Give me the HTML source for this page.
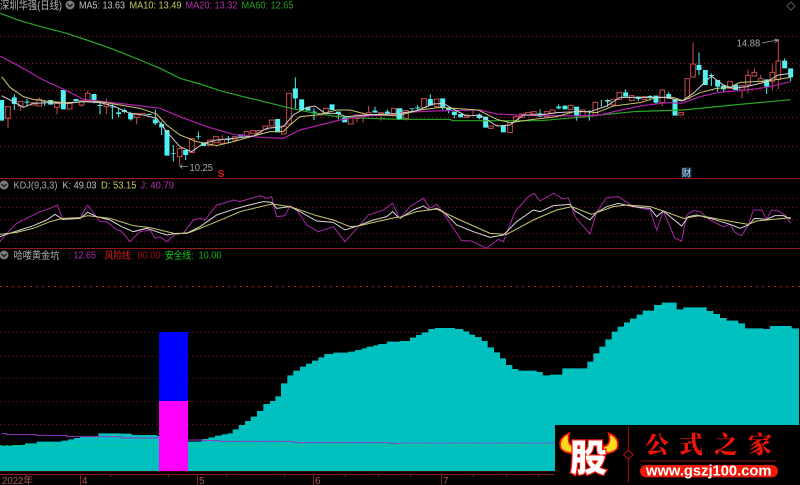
<!DOCTYPE html>
<html><head><meta charset="utf-8"><style>
html,body{margin:0;padding:0;background:#000;width:800px;height:485px;overflow:hidden}
svg{display:block;font-family:"Liberation Sans","Noto Sans CJK SC",sans-serif}
text{font-size:10px}
.b{filter:blur(.3px)}
</style></head><body>
<svg width="800" height="485" viewBox="0 0 800 485" xmlns="http://www.w3.org/2000/svg">
<rect width="800" height="485" fill="#000"/>
<g class="b">
<!-- grids -->
<g stroke="#9a1616" stroke-width="1" stroke-dasharray="1 3" fill="none">
<path d="M0 36.5H800M0 63.5H800M0 90.5H800M0 117.5H800M0 146.5H800"/>
<path d="M0 198.5H800M0 207.5H800M0 219.5H800M0 233.5H800M0 241.5H800" stroke="#701010"/>
<path d="M0 310.5H800M0 332.5H800M0 356.5H800M0 378.5H800M0 401.5H800M0 424.5H800" stroke="#701010"/>
<path d="M0 286.5H800" stroke="#c01818" stroke-dasharray="2 4"/>
</g>
<path d="M0 178.5H800M0 248.5H800" stroke="#8e1c1c" stroke-width="1"/>

<!-- lower area, left -->
<g transform="translate(0,270) scale(.33333)">
<path fill="#00c0c0" d="M0 603V527H40V525H75V520H110V515H185V512H205V508H222V504H240V500H295V490H360V491H395V495H470V498H478V603ZM563 603V515H605V507H625V502H645V497H665V493H682V490H698V478H716V465H735V453H752V440H771V423H790V402H810V393H826V379H843V340H862V316H880V302H900V290H918V281H936V272H955V262H973V252H1000V248H1045V245H1065V240H1085V235H1100V230H1120V226H1135V222H1160V215H1200V603Z"/>
<path fill="none" stroke="#8a3cc0" stroke-width="3" d="M5 491H20V494H110V496H200V500H365V504H478M563 510H610V512H660V514H880V518H1170V520H1200"/>
<path fill="none" stroke="#10e030" stroke-width="3" stroke-dasharray="5 13" d="M0 527H478M563 527H1200"/>
<rect x="477" y="186" width="87" height="207" fill="#0000ff"/>
<rect x="477" y="393" width="87" height="210" fill="#ff00ff"/>
</g>
<!-- lower area, right -->
<g transform="translate(400,270) scale(.33333)">
<path fill="#00c0c0" d="M0 603V213H30V203H48V195H65V187H85V177H105V174H165V177H190V184H208V194H225V201H245V213H263V232H282V247H300V265H318V285H337V297H355V302H410V306H428V316H450V314H487V295H562V275H580V250H598V230H616V208H635V185H653V170H672V157H690V146H710V134H728V122H762V105H785V98H830V118H850V112H920V123H940V132H960V144H980V152H1015V160H1035V175H1090V177H1110V168H1175V175H1197V603Z"/>
<path fill="none" stroke="#7060d8" stroke-width="3" d="M0 519H480"/>
<path fill="none" stroke="#10e030" stroke-width="3" stroke-dasharray="5 13" d="M0 527H480"/>
</g>
<!-- axis -->
<path d="M0 471.5H800" stroke="#3a0808"/>
<path d="M0 474.5H800M80.5 474V485M197.5 474V485M313.5 474V485M441.5 474V485" stroke="#8e1c1c" fill="none"/>
<path d="M110.5 474V477M168.5 474V477M226.5 474V477M284.5 474V477M345.5 474V477M378.5 474V477M410.5 474V477M473.5 474V477M506.5 474V477M538.5 474V477" stroke="#8e1c1c"/>
<g fill="#a85a5a">
<text x="2" y="484" textLength="31" lengthAdjust="spacingAndGlyphs">2022年</text>
<text x="82" y="484">4</text><text x="199" y="484">5</text><text x="315" y="484">6</text><text x="443" y="484">7</text>
</g>

<!-- candles left -->
<g transform="scale(.33333)" fill="none">
<path stroke="#c84c4c" stroke-width="3" d="M24 355V385M62 318V332M118 292V298M171 322V343M245 315V320M263 272V280M319 295V308M319 320V343M410 352V373M539 470V497M667 405V418M1071 355V366M1089 350V368M1106 318V338M1143 342V362M17 320h14v35h-14zM55 304h14v14h-14zM93 308h14v7h-14zM111 298h14v20h-14zM164 310h14v12h-14zM202 310h14v17h-14zM238 302h14v13h-14zM256 280h14v22h-14zM312 308h14v12h-14zM403 340h14v12h-14zM422 340h14v5h-14zM532 445h14v25h-14zM569 416h14v42h-14zM623 420h14v16h-14zM641 410h14v18h-14zM660 418h14v12h-14zM697 410h14v10h-14zM733 395h14v13h-14zM752 392h14v8h-14zM770 392h14v10h-14zM789 378h14v10h-14zM808 360h14v18h-14zM845 378h14v24h-14zM860 280h14v92h-14zM954 342h14v3h-14zM971 325h14v15h-14zM1045 350h14v22h-14zM1064 345h14v10h-14zM1082 345h14v5h-14zM1099 338h14v7h-14zM1136 338h14v4h-14zM1174 325h14v20h-14z"/>
<path stroke="#50f0f0" stroke-width="3" d="M43 283V330M81 297V320M134 300V318M282 303V310M300 303V343M337 310V358M356 325V352M373 325V340M392 335V362M466 328V375M485 365V405M520 435V485M557 465V480M595 395V418M685 408V430M886 232V325M942 325V360M1015 342V358M1125 320V338M1162 328V340"/>
<path stroke="#50f0f0" stroke-width="15" d="M5 300V362M43 292V312M81 305V308M134 303V305M152 300V314M190 270V328M228 297V303M282 282V303M300 315V318M337 320V322M356 337V342M373 330V336M392 340V358M447 342V345M466 358V370M485 372V382M501 390V467M520 460V462M557 450V465M595 408V410M611 428V438M685 418V420M722 403V410M833 357V397M886 265V295M905 298V330M924 322V332M942 335V340M996 313V330M1015 335V342M1034 352V367M1125 332V338M1162 335V340M1197 325V358"/>
<!-- MA left -->
<path stroke="#2aa82a" stroke-width="3.6" d="M0 40L60 62L130 82L200 100L260 120L340 148L420 180L480 205L540 235L600 252L660 272L730 290L800 307L860 322L920 335L1000 348L1100 355L1200 358"/>
<path stroke="#b020b0" stroke-width="3.6" d="M0 168L60 200L130 240L200 272L250 298L320 306L400 315L480 325L540 350L620 380L700 403L780 412L850 415L900 390L960 375L1020 360L1080 350L1200 340"/>
<path stroke="#c8c870" stroke-width="3" d="M5 230L30 262L70 290L100 298L150 305L200 308L250 305L300 305L360 315L420 325L470 342L500 375L540 405L590 425L650 437L700 425L760 408L810 395L850 395L870 375L900 350L950 345L1010 330L1050 330L1100 343L1200 348"/>
<path stroke="#d0d0d0" stroke-width="3" d="M5 287L30 300L70 322L100 310L150 308L200 310L250 305L300 308L340 318L390 340L430 345L470 355L500 395L540 440L575 455L610 430L650 420L700 415L760 408L800 385L850 380L880 345L920 322L945 318L975 340L1010 340L1040 350L1100 345L1200 340"/>
</g>
<!-- candles right -->
<g transform="translate(400,0) scale(.33333)" fill="none">
<path stroke="#c84c4c" stroke-width="3" d="M18 355V362M219 330V348M292 372V378M787 308V318M879 128V192M1026 270V295M1044 208V226M1044 255V280M1063 205V217M1082 225V236M1117 193V217M1117 245V270M1135 118V183M1135 238V267M11 332h14v23h-14zM65 296h14v27h-14zM103 297h14v23h-14zM193 345h14v7h-14zM266 378h14v7h-14zM323 368h14v29h-14zM341 350h14v15h-14zM359 342h14v10h-14zM377 337h14v8h-14zM395 335h14v7h-14zM433 335h14v15h-14zM451 330h14v10h-14zM505 316h14v12h-14zM541 330h14v17h-14zM579 307h14v38h-14zM633 298h14v17h-14zM651 278h14v20h-14zM688 287h14v15h-14zM726 290h14v8h-14zM780 270h14v38h-14zM836 338h14v7h-14zM855 236h14v60h-14zM872 192h14v39h-14zM983 244h14v21h-14zM1019 257h14v13h-14zM1037 226h14v29h-14zM1056 217h14v11h-14zM1075 236h14v9h-14zM1110 217h14v28h-14zM1128 183h14v55h-14z"/>
<path stroke="#50f0f0" stroke-width="3" d="M36 325V335M53 315V330M91 283V297M128 322V330M146 330V340M163 345V355M238 340V358M420 328V350M476 313V328M530 348V362M568 330V362M604 300V320M623 298V320M677 268V277M715 290V303M750 285V302M768 287V312M806 276V296M897 158V225M934 220V258M953 260V275M971 268V278M1100 260V282M1154 175V182M1172 232V243"/>
<path stroke="#50f0f0" stroke-width="15" d="M0 325V358M36 325V327M53 322V325M91 297V317M128 295V322M146 322V330M163 335V345M182 342V352M238 344V354M257 350V383M310 377V397M420 340V350M476 320V325M495 317V328M530 320V348M568 345V348M623 300V305M677 277V290M715 290V297M750 288V292M768 287V308M806 282V296M825 297V347M897 195V210M916 210V255M934 225V228M953 240V260M971 256V268M1007 254V270M1100 238V260M1154 182V205M1172 205V232"/>
<path stroke="#2aa82a" stroke-width="3.6" d="M0 358H150L157 362H420L560 350L620 343L700 335L850 330L1000 315L1172 299"/>
<path stroke="#b020b0" stroke-width="3.6" d="M0 338L100 333L150 332L240 330L290 342L350 345L530 348L600 345L650 333L720 318L800 308L845 310L900 290L950 278L1040 270L1100 262L1172 245"/>
<path stroke="#c8c870" stroke-width="3" d="M0 345L60 330L120 322L235 330L290 358L330 368L400 358L470 350L530 333L590 338L640 318L720 308L770 292L820 292L850 302L900 278L950 265L990 262L1020 247L1100 243L1140 237L1172 232"/>
<path stroke="#d0d0d0" stroke-width="3" d="M0 340L50 332L100 312L130 310L165 330L200 348L240 345L290 378L330 375L370 345L420 345L470 338L530 335L570 335L620 318L660 292L750 292L800 292L845 303L880 280L934 228L970 255L1000 265L1040 260L1100 245L1135 225L1172 220"/>
</g>
<!-- KDJ left -->
<g transform="translate(0,175) scale(.33333)" fill="none" stroke-width="3">
<path stroke="#a828a8" d="M0 200L20 175L50 145L90 125L120 110L150 100L172 90L188 133L240 130L263 90L300 140L320 140L345 160L365 170L390 200L420 170L450 165L465 190L480 185L500 200L530 175L550 175L580 135L600 130L615 135L650 90L670 85L700 75L720 80L780 62L800 70L815 65L830 125L855 122L870 92L890 105L920 150L955 170L1000 155L1035 200L1075 155L1105 120L1150 105L1178 85L1198 130"/>
<path stroke="#d8d8d8" d="M0 185L20 178L60 165L100 152L140 135L165 118L188 133L240 130L263 112L290 125L330 135L365 155L400 170L440 160L470 170L500 180L530 175L560 175L600 155L650 120L700 103L740 92L790 80L815 82L830 100L870 95L900 110L950 138L1000 142L1035 165L1075 152L1120 135L1160 125L1178 110L1198 130"/>
<path stroke="#c8c870" d="M0 178L50 172L100 160L150 140L188 130L240 128L263 122L330 130L400 152L450 158L530 177L570 172L650 140L720 110L815 87L870 95L950 122L1000 135L1050 155L1075 153L1130 140L1198 125"/>
</g>
<!-- KDJ right -->
<g transform="translate(400,175) scale(.33333)" fill="none" stroke-width="3">
<path stroke="#a828a8" d="M0 130L30 95L70 70L90 100L110 88L130 115L185 197L215 198L260 220L295 193L310 200L345 110L385 65L403 55L420 78L460 55L490 72L505 68L525 125L570 177L590 110L620 68L655 65L700 95L750 105L770 165L790 108L825 190L845 198L860 120L880 107L900 110L930 135L970 155L990 148L1005 172L1025 182L1045 150L1060 105L1085 105L1100 133L1115 105L1135 108L1155 120L1172 145"/>
<path stroke="#d8d8d8" d="M0 130L40 105L70 93L90 105L110 100L130 110L170 150L220 170L270 187L310 180L350 140L400 105L420 110L460 92L510 88L525 108L570 135L590 112L620 95L655 85L700 95L750 100L770 125L790 108L845 153L865 125L890 120L930 130L990 148L1020 160L1045 150L1065 130L1100 133L1125 122L1150 122L1172 132"/>
<path stroke="#c8c870" d="M0 127L50 110L110 102L180 135L270 175L320 178L400 135L470 105L515 95L575 118L640 95L680 90L750 95L790 108L850 130L900 122L985 138L1045 148L1070 138L1100 135L1172 128"/>
</g>

<!-- header text -->
<text x="0" y="9" textLength="62" lengthAdjust="spacingAndGlyphs" fill="#b8b8b8" style="font-size:11px">深圳华强(日线)</text>
<circle cx="70" cy="5" r="4.5" fill="#7a7a7a"/><path d="M67.5 4L70 6.5L72.5 4" stroke="#111" stroke-width="1.2" fill="none"/>
<text x="79" y="8.5" textLength="46" lengthAdjust="spacingAndGlyphs" fill="#c4c4c4">MA5: 13.63</text>
<text x="129.5" y="8.5" textLength="52" lengthAdjust="spacingAndGlyphs" fill="#c8c860">MA10: 13.49</text>
<text x="185.5" y="8.5" textLength="52" lengthAdjust="spacingAndGlyphs" fill="#b030b0">MA20: 13.32</text>
<text x="241.5" y="8.5" textLength="52" lengthAdjust="spacingAndGlyphs" fill="#20a020">MA60: 12.65</text>
<path d="M791 2L795 6L791 10L787 6Z" stroke="#555" fill="none"/>

<circle cx="4" cy="185" r="4.5" fill="#7a7a7a"/><path d="M1.5 184L4 186.5L6.5 184" stroke="#111" stroke-width="1.2" fill="none"/>
<text x="13.5" y="188.5" textLength="44" lengthAdjust="spacingAndGlyphs" fill="#a8a8a8">KDJ(9,3,3)</text>
<text x="62.5" y="188.5" textLength="34" lengthAdjust="spacingAndGlyphs" fill="#c0c0c0">K: 49.03</text>
<text x="101" y="188.5" textLength="35.5" lengthAdjust="spacingAndGlyphs" fill="#c8c860">D: 53.15</text>
<text x="140.5" y="188.5" textLength="33.5" lengthAdjust="spacingAndGlyphs" fill="#b030b0">J: 40.79</text>

<circle cx="4" cy="255" r="4.5" fill="#7a7a7a"/><path d="M1.5 254L4 256.5L6.5 254" stroke="#111" stroke-width="1.2" fill="none"/>
<text x="13.5" y="259" textLength="46" lengthAdjust="spacingAndGlyphs" fill="#b0b0b0">哈喽黄金坑</text>
<text x="68.5" y="258.5" textLength="27.5" lengthAdjust="spacingAndGlyphs" fill="#b030b0">: 12.65</text>
<text x="104.5" y="259" textLength="28.5" lengthAdjust="spacingAndGlyphs" fill="#e02020">风险线:</text>
<text x="137.5" y="258.5" textLength="23" lengthAdjust="spacingAndGlyphs" fill="#a01010">80.00</text>
<text x="165" y="259" textLength="28.5" lengthAdjust="spacingAndGlyphs" fill="#20d020">安全线:</text>
<text x="198.5" y="258.5" textLength="23" lengthAdjust="spacingAndGlyphs" fill="#18b018">10.00</text>

<!-- price labels -->
<text x="736.7" y="46.5" textLength="23.5" lengthAdjust="spacingAndGlyphs" fill="#a8a8a8">14.88</text>
<path d="M762 43L778 40M774 39L778.500 40L775 42.500" stroke="#a0a0a0" fill="none" stroke-width=".8"/>
<text x="189.5" y="171" textLength="23.500" lengthAdjust="spacingAndGlyphs" fill="#a8a8a8">10.25</text>
<path d="M180 166.500H188M182.500 164.500L180 166.500L182.500 168.500" stroke="#a0a0a0" fill="none" stroke-width=".8"/>
<text x="221" y="177" text-anchor="middle" fill="#e01818" font-weight="bold" style="font-size:10px">S</text>
<rect x="681.500" y="167.500" width="10" height="10" fill="#163c60"/>
<text x="686.500" y="176.500" text-anchor="middle" fill="#c8d8e8" style="font-size:9.500px">财</text>
</g>

<!-- watermark -->
<rect x="555" y="425" width="245" height="60" fill="#000"/>
<g transform="translate(550,420) scale(.33333)">
<path d="M58 40C38 48 26 62 32 84C38 94 54 100 70 100L76 80C62 78 50 70 58 40Z" fill="#ffd820" stroke="#f01808" stroke-width="5"/>
<path d="M176 40C196 48 208 62 202 84C196 94 180 100 164 100L158 80C172 78 184 70 176 40Z" fill="#ffd820" stroke="#f01808" stroke-width="5"/>
<path d="M235 20V93M235 116V188" stroke="#a01010" stroke-width="3" fill="none"/>
<path d="M235 90L249 104L235 118L221 104Z" stroke="#c01414" stroke-width="3" fill="none"/>
<path d="M272 123H678" stroke="#701010" stroke-width="4"/>
<rect x="270" y="135" width="414" height="37" rx="18.500" fill="#f01808"/>
</g>
<text x="588.500" y="471" text-anchor="middle" fill="#fff" stroke="#f01808" stroke-width="2.500" paint-order="stroke" font-weight="900" style="font-size:37px;font-family:'Noto Sans CJK SC',sans-serif">股</text>
<g fill="#ee1408" font-weight="900" style="font-family:'Noto Serif CJK SC','Noto Sans CJK SC',serif" text-anchor="middle">
<text x="657" y="453" style="font-size:24px">公</text>
<text x="691" y="453" style="font-size:24px">式</text>
<text x="726" y="453" style="font-size:24px">之</text>
<text x="760" y="453" style="font-size:24px">家</text>
</g>
<text x="646" y="475.500" textLength="125.500" lengthAdjust="spacingAndGlyphs" fill="#fff" font-weight="bold" style="font-size:14.500px">www.gszj100.com</text>
</svg>
</body></html>
